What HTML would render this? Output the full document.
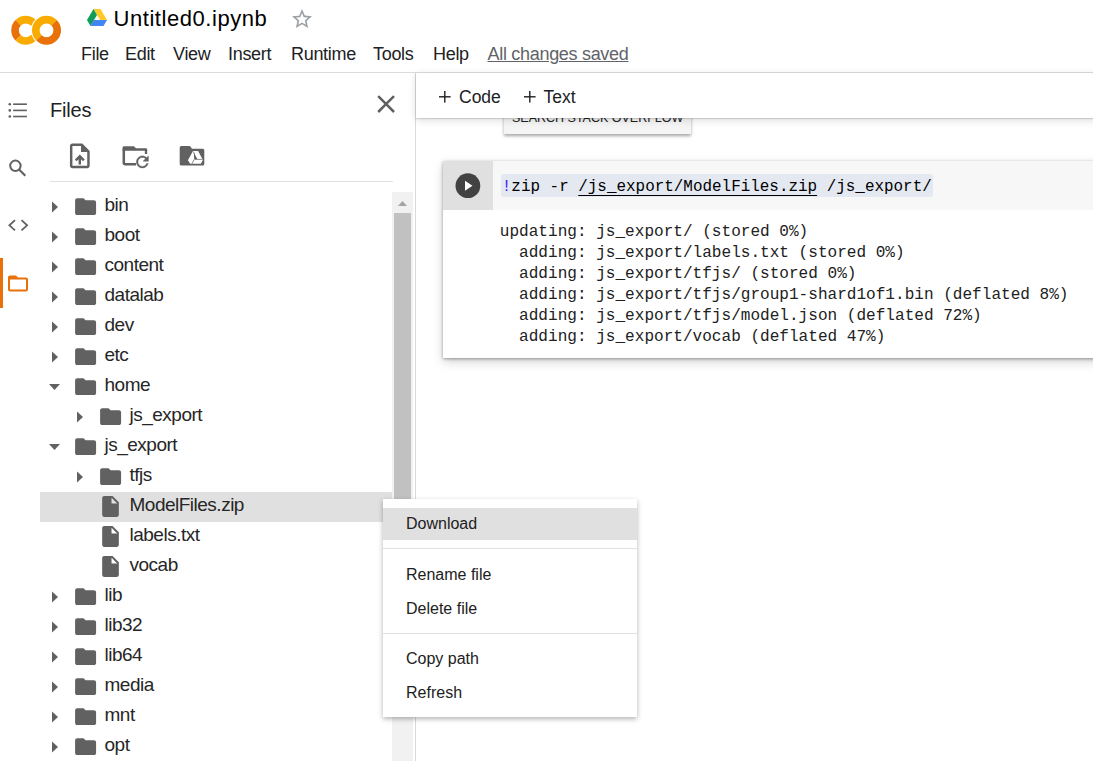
<!DOCTYPE html>
<html><head><meta charset="utf-8">
<style>
*{box-sizing:border-box;margin:0;padding:0}
html,body{width:1093px;height:761px;overflow:hidden;background:#fff;font-family:"Liberation Sans",sans-serif;color:#212121}
body{position:relative}
.abs{position:absolute;display:block}
.t{position:absolute;white-space:nowrap}
.menu{font-size:18px;letter-spacing:-0.3px;color:#202124;top:43px;line-height:22px}
.tl{font-size:19px;letter-spacing:-0.5px;line-height:30px;color:#262626}
.mono{font-family:"Liberation Mono",monospace}
.out{font-size:16.07px;line-height:21px;color:#212121}
.cm{position:absolute;font-size:16px;color:#212121;left:406px;line-height:20px}
</style></head><body>

<!-- logo -->
<svg class="abs" style="left:0;top:0" width="70" height="60" viewBox="0 0 70 60">
  <g fill="none" stroke-width="7.6">
    <path d="M33.95 23.42 A10.7 10.7 0 0 0 18.18 22.73" stroke="#F9AB00"/>
    <path d="M18.18 22.73 A10.7 10.7 0 0 0 18.18 37.87" stroke="#E8710A"/>
    <path d="M18.18 37.87 A10.7 10.7 0 0 0 33.95 37.18" stroke="#F9AB00"/>
    <circle cx="46.5" cy="30.3" r="10.7" stroke="#fff" stroke-width="9.6"/>
    <path d="M54.07 22.73 A10.7 10.7 0 0 0 38.93 22.73 A10.7 10.7 0 0 0 38.93 37.87" stroke="#F9AB00"/>
    <path d="M38.93 37.87 A10.7 10.7 0 0 0 54.07 37.87 A10.7 10.7 0 0 0 54.07 22.73" stroke="#E8710A"/>
  </g>
</svg>

<!-- drive icon -->
<svg class="abs" style="left:87px;top:9px" width="20" height="17" viewBox="0 0 20 17">
  <polygon points="6.5,0 13.5,0 20,11 13,11" fill="#FFC928"/>
  <polygon points="6.5,0 10,6 3.5,17 0,11" fill="#0F9D58"/>
  <polygon points="3.5,17 6.7,11 20,11 16.5,17" fill="#4285F4"/>
</svg>
<div class="t" style="left:113.5px;top:6px;font-size:22px;line-height:26px;letter-spacing:0.55px;color:#000">Untitled0.ipynb</div>
<svg class="abs" style="left:289.5px;top:6.5px" width="24" height="24" viewBox="0 0 24 24"><path fill="#9aa0a6" d="M22 9.24l-7.19-.62L12 2 9.19 8.63 2 9.24l5.46 4.73L5.82 21 12 17.27 18.18 21l-1.63-7.03L22 9.24zM12 15.4l-3.76 2.27 1-4.28-3.32-2.88 4.38-.38L12 6.1l1.71 4.04 4.38.38-3.32 2.88 1 4.28L12 15.4z"/></svg>

<div class="t menu" style="left:81px">File</div>
<div class="t menu" style="left:125px">Edit</div>
<div class="t menu" style="left:173px">View</div>
<div class="t menu" style="left:228px">Insert</div>
<div class="t menu" style="left:291px">Runtime</div>
<div class="t menu" style="left:373px">Tools</div>
<div class="t menu" style="left:433px">Help</div>
<div class="t menu" style="left:487.5px;color:#5f6368;text-decoration:underline">All changes saved</div>
<div class="abs" style="left:0;top:72px;width:1093px;height:1px;background:#dadce0"></div>

<!-- left rail -->
<svg class="abs" style="left:0;top:90px" width="40" height="230" viewBox="0 90 40 230">
  <g fill="#616161">
    <circle cx="9.8" cy="104.2" r="1.3"/><circle cx="9.8" cy="110.4" r="1.3"/><circle cx="9.8" cy="116.5" r="1.3"/>
    <rect x="13.1" y="103.4" width="13.8" height="1.6"/><rect x="13.1" y="109.6" width="13.8" height="1.6"/><rect x="13.1" y="115.7" width="13.8" height="1.6"/>
  </g>
  <g fill="none" stroke="#616161" stroke-width="1.7">
    <circle cx="15.4" cy="165.8" r="5.2" stroke-width="2"/>
    <line x1="19.3" y1="169.7" x2="25.3" y2="175.7" stroke-width="2.1"/>
    <polyline points="15,220.2 9.4,225.3 15,230.4" stroke-width="1.8"/>
    <polyline points="21.5,220.2 27.1,225.3 21.5,230.4" stroke-width="1.8"/>
  </g>
  <rect x="0" y="258" width="3" height="50" fill="#E8710A"/>
  <svg x="6" y="271.5" width="24" height="24" viewBox="0 0 24 24"><path fill="#E8710A" d="M20 6h-8l-2-2H4c-1.1 0-1.99.9-1.99 2L2 18c0 1.1.9 2 2 2h16c1.1 0 2-.9 2-2V8c0-1.1-.9-2-2-2zm0 12H4V8h16v10z"/></svg>
</svg>

<!-- files panel -->
<div class="t" style="left:50px;top:98px;font-size:20px;letter-spacing:-0.2px;line-height:24px;color:#212121">Files</div>
<svg class="abs" style="left:370.7px;top:89.2px" width="30.2" height="30.2" viewBox="0 0 24 24"><path fill="#5f5f5f" d="M19 6.41L17.59 5 12 10.59 6.41 5 5 6.41 10.59 12 5 17.59 6.41 19 12 13.41 17.59 19 19 17.59 13.41 12z"/></svg>

<!-- toolbar icons -->
<svg class="abs" style="left:65.26px;top:140.9px" width="29.64" height="29.64" viewBox="0 0 24 24"><path fill="#616161" d="M14 2H6c-1.1 0-1.99.9-1.99 2L4 20c0 1.1.89 2 1.99 2H18c1.1 0 2-.9 2-2V8l-6-6zm4 18H6V4h7v5h5v11zM8 15.01l1.41 1.41L11 14.84V19h2v-4.16l1.59 1.59L16 15.01 12.01 11 8 15.01z"/></svg>
<svg class="abs" style="left:0;top:0" width="220" height="180" viewBox="0 0 220 180">
  <g fill="#616161">
    <path d="M122.6 147.6a1.4 1.4 0 0 1 1.4-1.4h9.8l2.2 2.1h9.8a1.4 1.4 0 0 1 1.4 1.4v1.1h-24.6z"/>
  </g>
  <path d="M136 164.3H125a1.2 1.2 0 0 1-1.2-1.2V148.5" fill="none" stroke="#616161" stroke-width="2.5"/>
  <path d="M146 149.5V154" fill="none" stroke="#616161" stroke-width="2.3"/>
  <circle cx="142.7" cy="161.9" r="6.6" fill="#fff"/>
  <svg x="133.4" y="152.9" width="18" height="18" viewBox="0 0 24 24"><path fill="#616161" stroke="#616161" stroke-width="0.6" d="M17.65 6.35C16.2 4.9 14.21 4 12 4c-4.42 0-7.99 3.58-7.99 8s3.57 8 7.99 8c3.73 0 6.84-2.550 7.73-6h-2.08c-.82 2.33-3.04 4-5.650 4-3.31 0-6-2.69-6-6s2.69-6 6-6c1.66 0 3.14.69 4.22 1.78L13 11h7V4l-2.35 2.35z"/></svg>
  <path d="M179.7 147.6a1.5 1.5 0 0 1 1.5-1.5h8.6l2.3 2.7h10.7a1.5 1.5 0 0 1 1.5 1.5v13.8a1.5 1.5 0 0 1-1.5 1.5h-21.6a1.5 1.5 0 0 1-1.5-1.5z" fill="#616161"/>
  <polygon points="193,151.1 198.1,151.1 202.9,160.1 200.8,163.8 190.2,163.8 187.9,160.3" fill="#fff"/>
  <polygon points="193.8,152.6 197.4,159.2 194.2,159.2" fill="#616161"/>
  <path d="M194.4 159.2L191.9 163.8M195 159.4H202.6M193.2 151.6L194.6 154" stroke="#616161" stroke-width="0.7"/>
</svg>
<div class="abs" style="left:50px;top:181px;width:343px;height:1px;background:#e0e0e0"></div>

<!-- scrollbar -->
<div class="abs" style="left:392px;top:192px;width:21px;height:569px;background:#f1f1f1"></div>
<svg class="abs" style="left:397px;top:200px" width="12" height="7"><polygon points="1,6 10,6 5.5,1" fill="#a3a3a3"/></svg>
<div class="abs" style="left:394px;top:213px;width:17px;height:500px;background:#c1c1c1"></div>
<div class="abs" style="left:415px;top:73px;width:1px;height:688px;background:#dadada"></div>

<svg class="abs" style="left:52px;top:200.5px" width="7" height="12"><polygon points="0,0.5 6,6 0,11.5" fill="#616161"/></svg>
<svg class="abs" style="left:72.8px;top:193.8px" width="25.2" height="25.2" viewBox="0 0 24 24"><path d="M10 4H4c-1.1 0-1.99.9-1.99 2L2 18c0 1.1.9 2 2 2h16c1.1 0 2-.9 2-2V8c0-1.1-.9-2-2-2h-8l-2-2z" fill="#616161"/></svg>
<div class="t tl" style="left:104.5px;top:189.5px">bin</div>
<svg class="abs" style="left:52px;top:230.5px" width="7" height="12"><polygon points="0,0.5 6,6 0,11.5" fill="#616161"/></svg>
<svg class="abs" style="left:72.8px;top:223.8px" width="25.2" height="25.2" viewBox="0 0 24 24"><path d="M10 4H4c-1.1 0-1.99.9-1.99 2L2 18c0 1.1.9 2 2 2h16c1.1 0 2-.9 2-2V8c0-1.1-.9-2-2-2h-8l-2-2z" fill="#616161"/></svg>
<div class="t tl" style="left:104.5px;top:219.5px">boot</div>
<svg class="abs" style="left:52px;top:260.5px" width="7" height="12"><polygon points="0,0.5 6,6 0,11.5" fill="#616161"/></svg>
<svg class="abs" style="left:72.8px;top:253.8px" width="25.2" height="25.2" viewBox="0 0 24 24"><path d="M10 4H4c-1.1 0-1.99.9-1.99 2L2 18c0 1.1.9 2 2 2h16c1.1 0 2-.9 2-2V8c0-1.1-.9-2-2-2h-8l-2-2z" fill="#616161"/></svg>
<div class="t tl" style="left:104.5px;top:249.5px">content</div>
<svg class="abs" style="left:52px;top:290.5px" width="7" height="12"><polygon points="0,0.5 6,6 0,11.5" fill="#616161"/></svg>
<svg class="abs" style="left:72.8px;top:283.8px" width="25.2" height="25.2" viewBox="0 0 24 24"><path d="M10 4H4c-1.1 0-1.99.9-1.99 2L2 18c0 1.1.9 2 2 2h16c1.1 0 2-.9 2-2V8c0-1.1-.9-2-2-2h-8l-2-2z" fill="#616161"/></svg>
<div class="t tl" style="left:104.5px;top:279.5px">datalab</div>
<svg class="abs" style="left:52px;top:320.5px" width="7" height="12"><polygon points="0,0.5 6,6 0,11.5" fill="#616161"/></svg>
<svg class="abs" style="left:72.8px;top:313.8px" width="25.2" height="25.2" viewBox="0 0 24 24"><path d="M10 4H4c-1.1 0-1.99.9-1.99 2L2 18c0 1.1.9 2 2 2h16c1.1 0 2-.9 2-2V8c0-1.1-.9-2-2-2h-8l-2-2z" fill="#616161"/></svg>
<div class="t tl" style="left:104.5px;top:309.5px">dev</div>
<svg class="abs" style="left:52px;top:350.5px" width="7" height="12"><polygon points="0,0.5 6,6 0,11.5" fill="#616161"/></svg>
<svg class="abs" style="left:72.8px;top:343.8px" width="25.2" height="25.2" viewBox="0 0 24 24"><path d="M10 4H4c-1.1 0-1.99.9-1.99 2L2 18c0 1.1.9 2 2 2h16c1.1 0 2-.9 2-2V8c0-1.1-.9-2-2-2h-8l-2-2z" fill="#616161"/></svg>
<div class="t tl" style="left:104.5px;top:339.5px">etc</div>
<svg class="abs" style="left:49px;top:383.5px" width="12" height="7"><polygon points="0,0 11,0 5.5,6" fill="#616161"/></svg>
<svg class="abs" style="left:72.8px;top:373.8px" width="25.2" height="25.2" viewBox="0 0 24 24"><path d="M10 4H4c-1.1 0-1.99.9-1.99 2L2 18c0 1.1.9 2 2 2h16c1.1 0 2-.9 2-2V8c0-1.1-.9-2-2-2h-8l-2-2z" fill="#616161"/></svg>
<div class="t tl" style="left:104.5px;top:369.5px">home</div>
<svg class="abs" style="left:77px;top:410.5px" width="7" height="12"><polygon points="0,0.5 6,6 0,11.5" fill="#616161"/></svg>
<svg class="abs" style="left:97.8px;top:403.8px" width="25.2" height="25.2" viewBox="0 0 24 24"><path d="M10 4H4c-1.1 0-1.99.9-1.99 2L2 18c0 1.1.9 2 2 2h16c1.1 0 2-.9 2-2V8c0-1.1-.9-2-2-2h-8l-2-2z" fill="#616161"/></svg>
<div class="t tl" style="left:129.5px;top:399.5px">js_export</div>
<svg class="abs" style="left:49px;top:443.5px" width="12" height="7"><polygon points="0,0 11,0 5.5,6" fill="#616161"/></svg>
<svg class="abs" style="left:72.8px;top:433.8px" width="25.2" height="25.2" viewBox="0 0 24 24"><path d="M10 4H4c-1.1 0-1.99.9-1.99 2L2 18c0 1.1.9 2 2 2h16c1.1 0 2-.9 2-2V8c0-1.1-.9-2-2-2h-8l-2-2z" fill="#616161"/></svg>
<div class="t tl" style="left:104.5px;top:429.5px">js_export</div>
<svg class="abs" style="left:77px;top:470.5px" width="7" height="12"><polygon points="0,0.5 6,6 0,11.5" fill="#616161"/></svg>
<svg class="abs" style="left:97.8px;top:463.8px" width="25.2" height="25.2" viewBox="0 0 24 24"><path d="M10 4H4c-1.1 0-1.99.9-1.99 2L2 18c0 1.1.9 2 2 2h16c1.1 0 2-.9 2-2V8c0-1.1-.9-2-2-2h-8l-2-2z" fill="#616161"/></svg>
<div class="t tl" style="left:129.5px;top:459.5px">tfjs</div>
<div class="abs" style="left:40px;top:491.5px;width:352px;height:30px;background:#e0e0e0"></div>
<svg class="abs" style="left:97.8px;top:494.2px" width="25" height="25" viewBox="0 0 24 24"><path d="M6 2c-1.1 0-1.99.9-1.99 2L4 20c0 1.1.89 2 1.99 2H18c1.1 0 2-.9 2-2V8l-6-6H6zm7 7V3.5L18.5 9H13z" fill="#616161"/></svg>
<div class="t tl" style="left:129.5px;top:489.5px">ModelFiles.zip</div>
<svg class="abs" style="left:97.8px;top:524.2px" width="25" height="25" viewBox="0 0 24 24"><path d="M6 2c-1.1 0-1.99.9-1.99 2L4 20c0 1.1.89 2 1.99 2H18c1.1 0 2-.9 2-2V8l-6-6H6zm7 7V3.5L18.5 9H13z" fill="#616161"/></svg>
<div class="t tl" style="left:129.5px;top:519.5px">labels.txt</div>
<svg class="abs" style="left:97.8px;top:554.2px" width="25" height="25" viewBox="0 0 24 24"><path d="M6 2c-1.1 0-1.99.9-1.99 2L4 20c0 1.1.89 2 1.99 2H18c1.1 0 2-.9 2-2V8l-6-6H6zm7 7V3.5L18.5 9H13z" fill="#616161"/></svg>
<div class="t tl" style="left:129.5px;top:549.5px">vocab</div>
<svg class="abs" style="left:52px;top:590.5px" width="7" height="12"><polygon points="0,0.5 6,6 0,11.5" fill="#616161"/></svg>
<svg class="abs" style="left:72.8px;top:583.8px" width="25.2" height="25.2" viewBox="0 0 24 24"><path d="M10 4H4c-1.1 0-1.99.9-1.99 2L2 18c0 1.1.9 2 2 2h16c1.1 0 2-.9 2-2V8c0-1.1-.9-2-2-2h-8l-2-2z" fill="#616161"/></svg>
<div class="t tl" style="left:104.5px;top:579.5px">lib</div>
<svg class="abs" style="left:52px;top:620.5px" width="7" height="12"><polygon points="0,0.5 6,6 0,11.5" fill="#616161"/></svg>
<svg class="abs" style="left:72.8px;top:613.8px" width="25.2" height="25.2" viewBox="0 0 24 24"><path d="M10 4H4c-1.1 0-1.99.9-1.99 2L2 18c0 1.1.9 2 2 2h16c1.1 0 2-.9 2-2V8c0-1.1-.9-2-2-2h-8l-2-2z" fill="#616161"/></svg>
<div class="t tl" style="left:104.5px;top:609.5px">lib32</div>
<svg class="abs" style="left:52px;top:650.5px" width="7" height="12"><polygon points="0,0.5 6,6 0,11.5" fill="#616161"/></svg>
<svg class="abs" style="left:72.8px;top:643.8px" width="25.2" height="25.2" viewBox="0 0 24 24"><path d="M10 4H4c-1.1 0-1.99.9-1.99 2L2 18c0 1.1.9 2 2 2h16c1.1 0 2-.9 2-2V8c0-1.1-.9-2-2-2h-8l-2-2z" fill="#616161"/></svg>
<div class="t tl" style="left:104.5px;top:639.5px">lib64</div>
<svg class="abs" style="left:52px;top:680.5px" width="7" height="12"><polygon points="0,0.5 6,6 0,11.5" fill="#616161"/></svg>
<svg class="abs" style="left:72.8px;top:673.8px" width="25.2" height="25.2" viewBox="0 0 24 24"><path d="M10 4H4c-1.1 0-1.99.9-1.99 2L2 18c0 1.1.9 2 2 2h16c1.1 0 2-.9 2-2V8c0-1.1-.9-2-2-2h-8l-2-2z" fill="#616161"/></svg>
<div class="t tl" style="left:104.5px;top:669.5px">media</div>
<svg class="abs" style="left:52px;top:710.5px" width="7" height="12"><polygon points="0,0.5 6,6 0,11.5" fill="#616161"/></svg>
<svg class="abs" style="left:72.8px;top:703.8px" width="25.2" height="25.2" viewBox="0 0 24 24"><path d="M10 4H4c-1.1 0-1.99.9-1.99 2L2 18c0 1.1.9 2 2 2h16c1.1 0 2-.9 2-2V8c0-1.1-.9-2-2-2h-8l-2-2z" fill="#616161"/></svg>
<div class="t tl" style="left:104.5px;top:699.5px">mnt</div>
<svg class="abs" style="left:52px;top:740.5px" width="7" height="12"><polygon points="0,0.5 6,6 0,11.5" fill="#616161"/></svg>
<svg class="abs" style="left:72.8px;top:733.8px" width="25.2" height="25.2" viewBox="0 0 24 24"><path d="M10 4H4c-1.1 0-1.99.9-1.99 2L2 18c0 1.1.9 2 2 2h16c1.1 0 2-.9 2-2V8c0-1.1-.9-2-2-2h-8l-2-2z" fill="#616161"/></svg>
<div class="t tl" style="left:104.5px;top:729.5px">opt</div>

<!-- main toolbar -->
<div class="abs" style="left:504px;top:100px;width:187px;height:34px;background:#f5f5f5;box-shadow:0 2px 3px rgba(0,0,0,.35)"></div>
<div class="t" style="left:512px;top:110px;font-size:12.5px;line-height:16px;color:#212121">SEARCH STACK OVERFLOW</div>
<div class="abs" style="left:416px;top:73px;width:720px;height:45px;background:#fff;box-shadow:0 1px 1px rgba(0,0,0,.12),0 2px 8px rgba(0,0,0,.14)"></div>
<svg class="abs" style="left:439px;top:91px" width="12" height="12"><rect x="0" y="5.1" width="11.6" height="1.4" fill="#202124"/><rect x="5.1" y="0" width="1.4" height="11.6" fill="#202124"/></svg><div class="t" style="left:459px;top:87px;font-size:17.5px;line-height:20px;color:#202124">Code</div>
<svg class="abs" style="left:523.5px;top:91px" width="12" height="12"><rect x="0" y="5.1" width="11.6" height="1.4" fill="#202124"/><rect x="5.1" y="0" width="1.4" height="11.6" fill="#202124"/></svg><div class="t" style="left:543.5px;top:87px;font-size:17.5px;line-height:20px;color:#202124">Text</div>

<!-- code cell -->
<div class="abs" style="left:443px;top:161px;width:680px;height:197px;background:#fff;box-shadow:0 1px 3px rgba(0,0,0,.35),0 4px 10px rgba(0,0,0,.17)"></div>
<div class="abs" style="left:443px;top:161px;width:650px;height:49px;background:#f7f7f7"></div>
<div class="abs" style="left:443px;top:161px;width:50px;height:49px;background:#e0e0e0"></div>
<svg class="abs" style="left:455px;top:173px" width="26" height="26" viewBox="0 0 26 26"><circle cx="12.9" cy="12.7" r="12.4" fill="#424242"/><polygon points="10,7.7 17.5,12.7 10,17.7" fill="#fff"/></svg>
<div class="abs" style="left:501px;top:174px;width:432px;height:23px;background:#e4e9f1;border-radius:3px"></div>
<div class="t mono" style="left:501.8px;top:177px;font-size:15.93px;line-height:21px;color:#000"><span style="color:#3d1aff">!</span>zip&nbsp;-r&nbsp;<span style="text-decoration:underline;text-underline-offset:4px">/js_export/ModelFiles.zip</span>&nbsp;/js_export/</div>
<div class="t mono out" style="left:499.8px;top:222.0px">updating:&nbsp;js_export/&nbsp;(stored&nbsp;0%)</div>
<div class="t mono out" style="left:499.8px;top:242.9px">&nbsp;&nbsp;adding:&nbsp;js_export/labels.txt&nbsp;(stored&nbsp;0%)</div>
<div class="t mono out" style="left:499.8px;top:263.8px">&nbsp;&nbsp;adding:&nbsp;js_export/tfjs/&nbsp;(stored&nbsp;0%)</div>
<div class="t mono out" style="left:499.8px;top:284.8px">&nbsp;&nbsp;adding:&nbsp;js_export/tfjs/group1-shard1of1.bin&nbsp;(deflated&nbsp;8%)</div>
<div class="t mono out" style="left:499.8px;top:305.7px">&nbsp;&nbsp;adding:&nbsp;js_export/tfjs/model.json&nbsp;(deflated&nbsp;72%)</div>
<div class="t mono out" style="left:499.8px;top:326.6px">&nbsp;&nbsp;adding:&nbsp;js_export/vocab&nbsp;(deflated&nbsp;47%)</div>

<!-- context menu -->
<div class="abs" style="left:383px;top:499px;width:254px;height:218px;background:#fff;box-shadow:0 2px 5px rgba(0,0,0,.3)"></div>
<div class="abs" style="left:383px;top:508px;width:254px;height:32px;background:#e0e0e0"></div>
<div class="cm t" style="top:514px">Download</div>
<div class="abs" style="left:383px;top:548px;width:254px;height:1px;background:#e0e0e0"></div>
<div class="cm t" style="top:565px">Rename file</div>
<div class="cm t" style="top:599px">Delete file</div>
<div class="abs" style="left:383px;top:633px;width:254px;height:1px;background:#e0e0e0"></div>
<div class="cm t" style="top:649px">Copy path</div>
<div class="cm t" style="top:683px">Refresh</div>

</body></html>
